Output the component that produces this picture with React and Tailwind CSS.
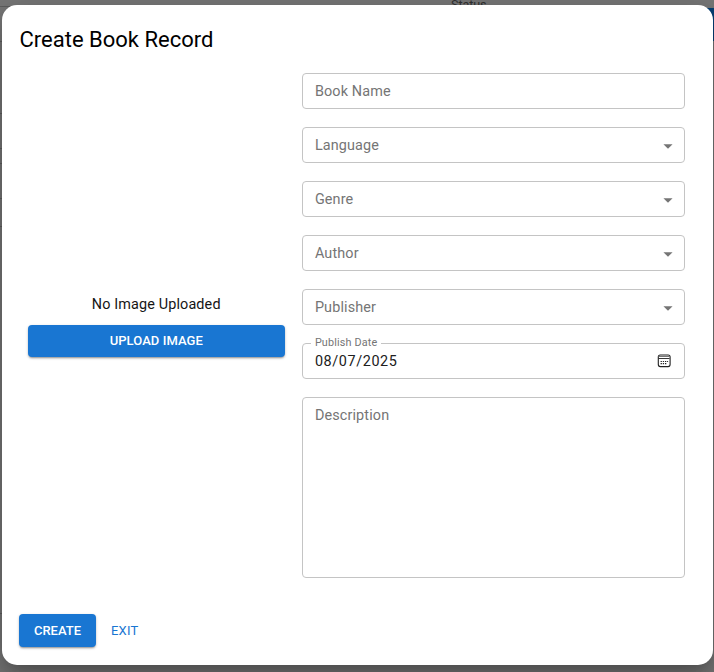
const selects = ["Language", "Genre", "Author", "Publisher"];
const box = "flex h-9 shrink-0 items-center rounded border border-[#c4c4c4] pl-[11.5px] pr-[10.5px] text-[14.4px] tracking-[0.135px] text-[#757575]";
const raised = "flex items-center justify-center rounded bg-[#1976d2] text-[13px] font-medium text-white shadow-[0_2px_2px_-1px_rgba(0,0,0,0.3),0_1px_3px_rgba(0,0,0,0.22)]";

function Arrow() {
  return (
    <svg className="h-[22px] w-[22px]" viewBox="0 0 24 24" fill="#757575">
      <path d="m7 10 5 5 5-5z" />
    </svg>
  );
}

function Calendar() {
  return (
    <svg className="mr-[3px] h-[14px] w-[14px]" viewBox="0 0 14 14" fill="none" stroke="#202020">
      <rect x="1.3" y="1" width="11.8" height="11.6" rx="2" strokeWidth="1.1" />
      <path d="M1.5 2.5h11" stroke="#777777" strokeWidth="1" />
      <path d="M1.5 4.5h11" strokeWidth="0.9" />
      <path d="M3.6 7.5h1.3M5.8 7.5h1.3M8 7.5h1.3M10.1 7.5h1M3.6 9.7h1.3M5.8 9.7h1.3M8 9.7h1.3" strokeWidth="1.2" />
    </svg>
  );
}

export default function App() {
  return (
    <div className="relative h-[672px] w-[714px] overflow-hidden bg-[#777777] font-[Roboto,sans-serif]">
      <div className="absolute left-[451px] top-[-3px] text-[12.6px] leading-[16px] text-[#303030] tracking-[-0.1px]">Status</div>
      <div className="absolute right-0 top-2 h-[33px] w-10 bg-[#073f74]" />
      {[6, 41, 113, 148, 163, 198, 226, 613].map((y) => (
        <div key={y} className="absolute left-0 h-px w-4 bg-[#5e5e5e]" style={{ top: y }} />
      ))}
      <div className="absolute left-[1.5px] top-[5px] flex h-[660px] w-[711px] flex-col rounded-[15px] bg-white pl-[17.5px] shadow-[0_10px_14px_-6px_rgba(0,0,0,0.2),0_20px_34px_3px_rgba(0,0,0,0.14),0_8px_40px_7px_rgba(0,0,0,0.12)]">
        <h1 className="mt-[20px] h-[30px] pl-[0.5px] text-[22px] leading-[30px] text-black">Create Book Record</h1>
        <div className="mt-[13px] flex h-[520px]">
          <div className="flex w-[273.5px] flex-col items-center pl-[9px] pr-2 pt-[226px]">
            <div className="h-[22px] text-[14.4px] leading-[22px] tracking-[0.135px] text-[#151515]">No Image Uploaded</div>
            <button className={`${raised} mt-[9px] h-8 w-full tracking-[0.06px]`}>UPLOAD IMAGE</button>
          </div>
          <div className="ml-[9.9px] flex w-[383px] flex-col gap-[18px] pt-[5px]">
            <div className={`${box} pt-[2px]`}>Book Name</div>
            {selects.map((name) => (
              <div key={name} className={`${box} justify-between !pr-[5px] pt-[2px]`}>
                {name}
                <Arrow />
              </div>
            ))}
            <div className={`${box} relative justify-between`}>
              <span className="absolute left-[7.5px] top-[-9px] bg-white px-1 text-[10.8px] leading-4 tracking-[0.16px]">Publish Date</span>
              <span className="pt-[2px] tracking-[0.6px] text-[#202020]">08/07/2025</span>
              <Calendar />
            </div>
            <div className={`${box} !h-[181px] !items-start pt-[7px] leading-[22px]`}>Description</div>
          </div>
        </div>
        <div className="mt-[26px] flex items-center">
          <button className={`${raised} h-[33px] w-[77px]`}>CREATE</button>
          <button className="ml-[15px] text-[13px] tracking-[0.2px] text-[#1976d2]">EXIT</button>
        </div>
      </div>
    </div>
  );
}
